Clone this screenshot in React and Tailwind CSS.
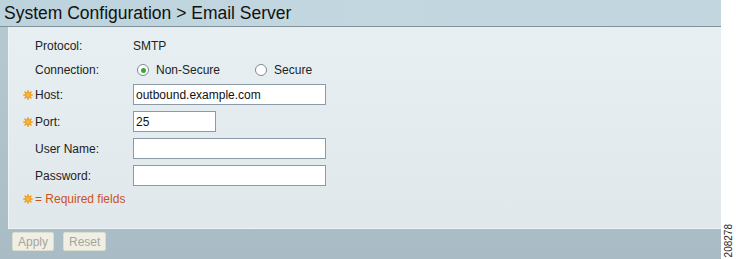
import React from "react";

const Star = () => (
  <svg width="10" height="10" viewBox="0 0 10 10" className="shrink-0">
    <g stroke="#f0a020" strokeWidth="1.6" strokeLinecap="round">
      <line x1="5" y1="0.8" x2="5" y2="9.2" />
      <line x1="0.8" y1="5" x2="9.2" y2="5" />
      <line x1="2" y1="2" x2="8" y2="8" />
      <line x1="8" y1="2" x2="2" y2="8" />
    </g>
    <circle cx="5" cy="5" r="2.6" fill="#f7b733" stroke="#e58a10" strokeWidth="0.6" />
  </svg>
);

const Radio = ({ checked }) => (
  <span className="w-[12px] h-[12px] rounded-full border border-[#7c8a90] bg-white flex items-center justify-center shrink-0">
    {checked && <span className="w-[5px] h-[5px] rounded-full bg-[#3aa63a]" />}
  </span>
);

function Row({ label, required, children, className = "" }) {
  return (
    <div className={"flex items-center " + className}>
      <div className="w-[124px] flex items-center">
        <div className="w-[26px] pl-[14px] flex items-center">{required && <Star />}</div>
        <span className="text-[12px] text-[#222]">{label}</span>
      </div>
      {children}
    </div>
  );
}

const Field = ({ w, value }) => (
  <div className={"h-[21px] bg-white border border-[#8a9aa6] flex items-center px-[2px] text-[12px] text-[#111] " + w}>
    {value}
  </div>
);

export default function App() {
  return (
    <div className="w-[736px] h-[259px] flex bg-white" style={{ fontFamily: '"Liberation Sans", Arial, sans-serif' }}>
      <div className="w-[723px] flex flex-col bg-[#b3c5ce]">
        <div className="h-[27px] bg-gradient-to-r from-[#bcd3dd] via-[#c3d7e0] to-[#c2d6df] border-b border-[#7e9298] flex items-center pl-[4px] pt-[2px]">
          <h1 className="text-[17.5px] text-[#111] leading-none">System Configuration &gt; Email Server</h1>
        </div>
        <div className="flex-1 flex flex-col pl-[8px] bg-gradient-to-b from-[#b6c8d1] to-[#a9bcc6]">
          <div className="h-[202px] bg-gradient-to-b from-[#e7eff2] to-[#e1e8ec] border-l border-[#eef4f6] border-b border-[#8d9ca4] pt-[9px]">
            <Row label="Protocol:" className="h-[20px]">
              <span className="text-[12px] text-[#222]">SMTP</span>
            </Row>
            <Row label="Connection:" className="h-[20px] mt-[4px]">
              <div className="flex items-center ml-[4px] gap-[7px]">
                <Radio checked />
                <span className="text-[12px] text-[#222]">Non-Secure</span>
              </div>
              <div className="flex items-center ml-[35px] gap-[7px]">
                <Radio />
                <span className="text-[12px] text-[#222]">Secure</span>
              </div>
            </Row>
            <Row label="Host:" required className="h-[21px] mt-[4px]">
              <Field w="w-[193px]" value="outbound.example.com" />
            </Row>
            <Row label="Port:" required className="h-[21px] mt-[6px]">
              <Field w="w-[83px]" value="25" />
            </Row>
            <Row label="User Name:" className="h-[21px] mt-[6px]">
              <Field w="w-[193px]" value="" />
            </Row>
            <Row label="Password:" className="h-[21px] mt-[6px]">
              <Field w="w-[193px]" value="" />
            </Row>
            <div className="h-[20px] mt-[3px] flex items-center pl-[14px] gap-[2px]">
              <Star />
              <span className="text-[12px] text-[#c9531c]">= Required fields</span>
            </div>
          </div>
          <div className="flex gap-[9px] pt-[3px] pl-[4px]">
            <button className="h-[19px] px-[5px] bg-[#f0efe3] border border-[#dcdccf] rounded-[2px] text-[12px] text-[#a5a5a0]">Apply</button>
            <button className="h-[19px] px-[5px] bg-[#f0efe3] border border-[#dcdccf] rounded-[2px] text-[12px] text-[#a5a5a0]">Reset</button>
          </div>
        </div>
      </div>
      <div className="flex-1 flex items-end justify-center pb-[2px]">
        <span className="text-[10px] text-[#222] [writing-mode:vertical-rl] rotate-180">208278</span>
      </div>
    </div>
  );
}
